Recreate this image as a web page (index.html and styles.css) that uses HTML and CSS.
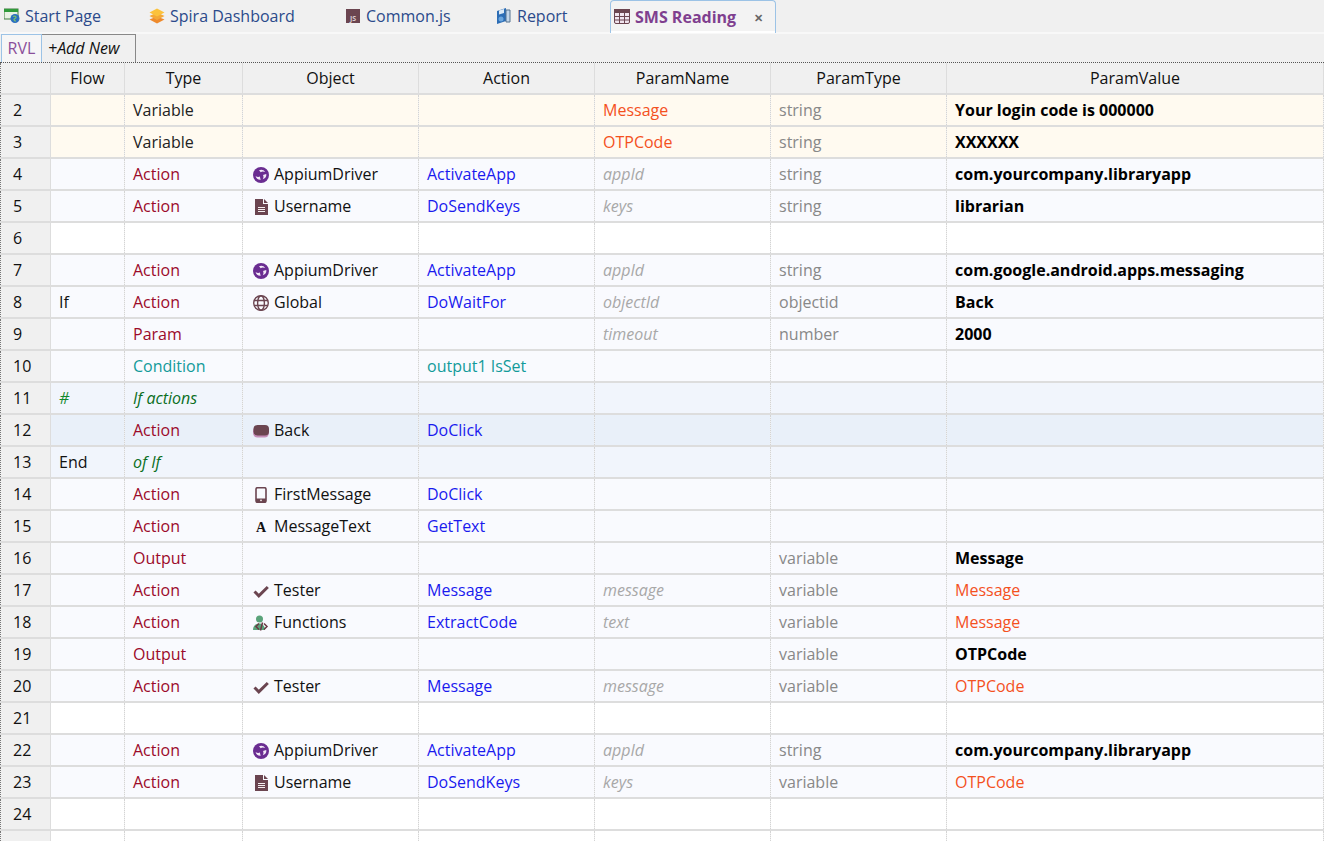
FILE: index.html
```html
<!DOCTYPE html>
<html lang="en">

<head>
    <meta charset="UTF-8">
    <title>SMS Reading</title>
    <link rel="stylesheet" href="styles.css">
</head>

<body>
    <svg class="defs" width="0" height="0">
        <symbol id="i-appium" viewBox="0 0 16 16">
            <circle cx="8" cy="8" r="8" fill="#6a2d91" />
            <path d="M6 3.2c2.4-1.2 5-.3 6 1.8-1.500-.9-3.200-.8-4.300.2C7.200 4.500 6.500 3.800 6 3.200z" fill="#f3eaf7" />
            <path d="M13.300 7c.4 2.700-1.300 4.800-3.600 5.200 1-1.400 1-3 .3-4.300.9-.1 2.200-.5 3.300-.9z" fill="#f3eaf7" />
            <path d="M7.700 12.800c-2.600.2-4.700-1.400-5.100-3.700 1.400 1 3.100 1.100 4.300.4.100.9.400 2.200.8 3.300z" fill="#f3eaf7" />
        </symbol>
        <symbol id="i-doc" viewBox="0 0 16 16">
            <path d="M2 0h8v5h5v11H2z" fill="#6b4550" />
            <path d="M11 0l4 4h-4z" fill="#6b4550" />
            <path d="M5 8h7v1H5zM5 10h7v1H5zM5 12h7v1H5z" fill="#f4eef0" />
        </symbol>
        <symbol id="i-globe" viewBox="0 0 16 16">
            <circle cx="8" cy="8" r="7.300" fill="none" stroke="#6b4550" stroke-width="1.400" />
            <ellipse cx="8" cy="8" rx="3.400" ry="7.300" fill="none" stroke="#6b4550" stroke-width="1.400" />
            <path d="M1 5.500h14M1 10.500h14" stroke="#6b4550" stroke-width="1.400" />
        </symbol>
        <symbol id="i-button" viewBox="0 0 16 16">
            <rect x="0" y="3.500" width="16" height="11" rx="4.500" fill="#c58db8" />
            <rect x="0.500" y="2" width="15.500" height="10.500" rx="4" fill="#6b4550" />
        </symbol>
        <symbol id="i-phone" viewBox="0 0 16 16">
            <rect x="3" y="0.700" width="10" height="14.600" rx="1.500" fill="none" stroke="#6b4550" stroke-width="1.600" />
            <path d="M3 11.500h10v3.800H3z" fill="#6b4550" />
            <circle cx="8" cy="13.300" r=".9" fill="#f4eef0" />
        </symbol>
        <symbol id="i-check" viewBox="0 0 16 16">
            <path d="M1.500 8.500l4.300 4.300L14.800 4" fill="none" stroke="#6b4550" stroke-width="3" />
        </symbol>
        <symbol id="i-func" viewBox="0 0 16 16">
            <circle cx="6.500" cy="4" r="3.500" fill="#5aa37a" />
            <path d="M0 15c0-4 2.500-6.500 6-6.500s6 2.500 6 6.500z" fill="#5aa37a" />
            <path d="M6 8.500l-3 3 3 3M11 8.500l3 3-3 3M9.500 7.500l-2 8" fill="none" stroke="#6b3a45" stroke-width="1.500" />
        </symbol>
        <symbol id="i-start" viewBox="0 0 16 16">
            <rect x="0" y="1" width="14" height="10" fill="#e8f2e4" stroke="#3f7a3c" />
            <rect x="0" y="1" width="14" height="3" fill="#2f9a3a" />
            <circle cx="11" cy="10.500" r="4.500" fill="#2a6fc0" />
            <path d="M9 8.500c2-1 3 0 3 1s-2 1-2 2 1 1 1.500 2" fill="none" stroke="#7cc36a" stroke-width="1.300" />
        </symbol>
        <symbol id="i-spira" viewBox="0 0 16 16">
            <path d="M8 8.500l7.500 3L8 15.500 .5 11.500z" fill="#ee8a2c" />
            <path d="M8 4.500l7.500 3.500L8 12 .5 8z" fill="#f4a836" />
            <path d="M8 .5l7.500 4L8 8.500.5 4.500z" fill="#fbc23c" />
        </symbol>
        <symbol id="i-report" viewBox="0 0 16 16">
            <path d="M1 3l9-3v13l-9 3z" fill="#2c6db5" />
            <path d="M10 2h4v12h-4z" fill="#c3d6ea" stroke="#55728f" />
            <path d="M3 2.500l5-1.500v4l-5 1.500z" fill="#dbe9f6" />
            <circle cx="5" cy="11" r="2.500" fill="#6ba6de" />
        </symbol>
        <symbol id="i-table" viewBox="0 0 16 16">
            <rect x="0.500" y="0.500" width="15" height="14" rx="1.500" fill="#f0e4ee" stroke="#6b4550" />
            <path d="M0 0h16v4H0z" fill="#6b4550" />
            <path d="M5.500 4v10M10.500 4v10M1 7.500h14M1 11h14" stroke="#6b4550" />
        </symbol>
    </svg>

    <div class="tabbar">
        <div class="tab tab-start"><svg class="tab-icon"><use href="#i-start" /></svg>Start Page</div>
        <div class="tab tab-spira"><svg class="tab-icon"><use href="#i-spira" /></svg>Spira Dashboard</div>
        <div class="tab tab-common"><span class="js-icon">JS</span>Common.js</div>
        <div class="tab tab-report"><svg class="tab-icon"><use href="#i-report" /></svg>Report</div>
        <div class="tab tab-active"><svg class="tab-icon"><use href="#i-table" /></svg>SMS Reading<span class="tab-close">✕</span></div>
    </div>

    <div class="subtabs">
        <div class="subtab subtab-on">RVL</div>
        <div class="subtab subtab-add">+Add New</div>
    </div>

    <table class="grid">
        <colgroup>
            <col class="c-num"><col class="c-flow"><col class="c-type"><col class="c-obj"><col class="c-act"><col class="c-pn"><col class="c-pt"><col>
        </colgroup>
        <thead>
            <tr><th></th><th>Flow</th><th>Type</th><th>Object</th><th>Action</th><th>ParamName</th><th>ParamType</th><th>ParamValue</th></tr>
        </thead>
        <tbody>
            <tr class="r-var"><td class="num">2</td><td></td><td class="plain">Variable</td><td></td><td></td><td class="var">Message</td><td class="gray">string</td><td class="val">Your login code is 000000</td></tr>
            <tr class="r-var"><td class="num">3</td><td></td><td class="plain">Variable</td><td></td><td></td><td class="var">OTPCode</td><td class="gray">string</td><td class="val">XXXXXX</td></tr>
            <tr><td class="num">4</td><td></td><td class="red">Action</td><td><svg class="ico"><use href="#i-appium" /></svg>AppiumDriver</td><td class="blue">ActivateApp</td><td class="hint">appId</td><td class="gray">string</td><td class="val">com.yourcompany.libraryapp</td></tr>
            <tr><td class="num">5</td><td></td><td class="red">Action</td><td><svg class="ico"><use href="#i-doc" /></svg>Username</td><td class="blue">DoSendKeys</td><td class="hint">keys</td><td class="gray">string</td><td class="val">librarian</td></tr>
            <tr class="r-blank"><td class="num">6</td><td></td><td></td><td></td><td></td><td></td><td></td><td></td></tr>
            <tr><td class="num">7</td><td></td><td class="red">Action</td><td><svg class="ico"><use href="#i-appium" /></svg>AppiumDriver</td><td class="blue">ActivateApp</td><td class="hint">appId</td><td class="gray">string</td><td class="val">com.google.android.apps.messaging</td></tr>
            <tr><td class="num">8</td><td>If</td><td class="red">Action</td><td><svg class="ico"><use href="#i-globe" /></svg>Global</td><td class="blue">DoWaitFor</td><td class="hint">objectId</td><td class="gray">objectid</td><td class="val">Back</td></tr>
            <tr><td class="num">9</td><td></td><td class="red">Param</td><td></td><td></td><td class="hint">timeout</td><td class="gray">number</td><td class="val">2000</td></tr>
            <tr><td class="num">10</td><td></td><td class="teal">Condition</td><td></td><td class="teal">output1 IsSet</td><td></td><td></td><td></td></tr>
            <tr class="r-if"><td class="num">11</td><td class="green">#</td><td class="note">If actions</td><td></td><td></td><td></td><td></td><td></td></tr>
            <tr class="r-sel"><td class="num">12</td><td></td><td class="red">Action</td><td><svg class="ico"><use href="#i-button" /></svg>Back</td><td class="blue">DoClick</td><td></td><td></td><td></td></tr>
            <tr class="r-if"><td class="num">13</td><td>End</td><td class="note">of If</td><td></td><td></td><td></td><td></td><td></td></tr>
            <tr><td class="num">14</td><td></td><td class="red">Action</td><td><svg class="ico"><use href="#i-phone" /></svg>FirstMessage</td><td class="blue">DoClick</td><td></td><td></td><td></td></tr>
            <tr><td class="num">15</td><td></td><td class="red">Action</td><td><span class="ico-a">A</span>MessageText</td><td class="blue">GetText</td><td></td><td></td><td></td></tr>
            <tr><td class="num">16</td><td></td><td class="red">Output</td><td></td><td></td><td></td><td class="gray">variable</td><td class="val">Message</td></tr>
            <tr><td class="num">17</td><td></td><td class="red">Action</td><td><svg class="ico"><use href="#i-check" /></svg>Tester</td><td class="blue">Message</td><td class="hint">message</td><td class="gray">variable</td><td class="var">Message</td></tr>
            <tr><td class="num">18</td><td></td><td class="red">Action</td><td><svg class="ico"><use href="#i-func" /></svg>Functions</td><td class="blue">ExtractCode</td><td class="hint">text</td><td class="gray">variable</td><td class="var">Message</td></tr>
            <tr><td class="num">19</td><td></td><td class="red">Output</td><td></td><td></td><td></td><td class="gray">variable</td><td class="val">OTPCode</td></tr>
            <tr><td class="num">20</td><td></td><td class="red">Action</td><td><svg class="ico"><use href="#i-check" /></svg>Tester</td><td class="blue">Message</td><td class="hint">message</td><td class="gray">variable</td><td class="var">OTPCode</td></tr>
            <tr class="r-blank"><td class="num">21</td><td></td><td></td><td></td><td></td><td></td><td></td><td></td></tr>
            <tr><td class="num">22</td><td></td><td class="red">Action</td><td><svg class="ico"><use href="#i-appium" /></svg>AppiumDriver</td><td class="blue">ActivateApp</td><td class="hint">appId</td><td class="gray">string</td><td class="val">com.yourcompany.libraryapp</td></tr>
            <tr><td class="num">23</td><td></td><td class="red">Action</td><td><svg class="ico"><use href="#i-doc" /></svg>Username</td><td class="blue">DoSendKeys</td><td class="hint">keys</td><td class="gray">variable</td><td class="var">OTPCode</td></tr>
            <tr class="r-blank"><td class="num">24</td><td></td><td></td><td></td><td></td><td></td><td></td><td></td></tr>
            <tr class="r-blank"><td class="num"></td><td></td><td></td><td></td><td></td><td></td><td></td><td></td></tr>
        </tbody>
    </table>
</body>

</html>
```

FILE: styles.css
```css
html, body {
    height: 100%;
}

body {
    margin: 0;
    height: 841px;
    overflow: hidden;
    background-color: #f0f0f0;
    font-family: "Open Sans", "Noto Sans", sans-serif;
    font-size: 16px;
    color: #111;
}

.defs {
    position: absolute;
}

/* top tabs */
.tabbar {
    display: flex;
    height: 32px;
    padding-left: 4px;
    border-bottom: 2px solid #f8f8f8;
}

.tab {
    display: flex;
    align-items: center;
    height: 32px;
    color: #2b4a8b;
    white-space: nowrap;
}

.tab-start { width: 145px; }
.tab-spira { width: 196px; }
.tab-common { width: 151px; }
.tab-report { width: 114px; }

.tab-icon {
    width: 16px;
    height: 16px;
    margin-right: 5px;
    flex: none;
}

.js-icon {
    width: 14px;
    height: 14px;
    margin: 0 6px 0 1px;
    background-color: #6b4550;
    color: #d8cdd0;
    font-size: 7px;
    font-weight: 700;
    line-height: 19px;
    text-align: center;
    overflow: hidden;
}

.tab-active {
    width: 166px;
    height: 33px;
    padding-left: 3px;
    box-sizing: border-box;
    background-color: #fff;
    border: 1px solid #9cc3e6;
    border-bottom: none;
    border-radius: 4px 4px 0 0;
    color: #7f3f8f;
    font-weight: 700;
    background: linear-gradient(#f3f3f3, #f3f3f3 30px, #fff 30px);
}

.tab-close {
    margin-left: 18px;
    font-size: 11px;
    color: #666;
}

/* RVL / add new */
.subtabs {
    display: flex;
    height: 28px;
    padding-left: 1px;
    border-bottom: 1px dotted #555;
}

.subtab {
    line-height: 27px;
    border: 1px solid #888;
    border-bottom: none;
    box-sizing: border-box;
    height: 28px;
}

.subtab-on {
    width: 41px;
    text-align: center;
    color: #8a4f9a;
    background-color: #f6f6f6;
    border-color: #9cc3e6;
    border-bottom: none;
}

.subtab-add {
    width: 94px;
    padding-left: 6px;
    border-left: none;
    font-style: italic;
}

/* grid */
.grid {
    width: 1324px;
    table-layout: fixed;
    border-collapse: collapse;
    border-left: 1px dotted #777;
}

.c-num { width: 50px; }
.c-flow { width: 74px; }
.c-type { width: 118px; }
.c-obj { width: 176px; }
.c-act { width: 176px; }
.c-pn { width: 176px; }
.c-pt { width: 176px; }

th {
    height: 30px;
    padding: 0;
    font-weight: 400;
    background-color: #f0f0f0;
    border-right: 1px solid #ddd;
    border-bottom: 2px solid #ddd;
}

td {
    height: 30px;
    padding: 0 0 0 8px;
    background-color: #f9fafe;
    border-right: 1px dotted #d4d4d4;
    border-bottom: 2px solid #ddd;
    white-space: nowrap;
    overflow: hidden;
}

td.num {
    padding-left: 12px;
    background-color: #f0f0f0;
    border-right: 1px solid #ddd;
}

.r-var td:not(.num) { background-color: #fffaf0; }
.r-blank td:not(.num) { background-color: #fff; }
.r-if td:not(.num) { background-color: #f1f5fc; }
.r-sel td:not(.num) { background-color: #e9f0f9; }

.plain { color: #222; }
.red { color: #9c0a2a; }
.blue { color: #1a1aee; }
.teal { color: #129a9a; }
.gray { color: #888; }
.var { color: #f4511e; }
.val { font-weight: 700; color: #000; }
.hint { font-style: italic; color: #a8a8a8; }
.green { color: #118a2e; font-style: italic; }
.note { color: #0a6e1e; font-style: italic; }

.ico {
    width: 16px;
    height: 16px;
    margin: 0 5px 0 2px;
    vertical-align: -3px;
}

.ico-a {
    display: inline-block;
    width: 16px;
    margin: 0 5px 0 2px;
    text-align: center;
    font-family: "Liberation Serif", serif;
    font-weight: 700;
    font-size: 14px;
}
```
